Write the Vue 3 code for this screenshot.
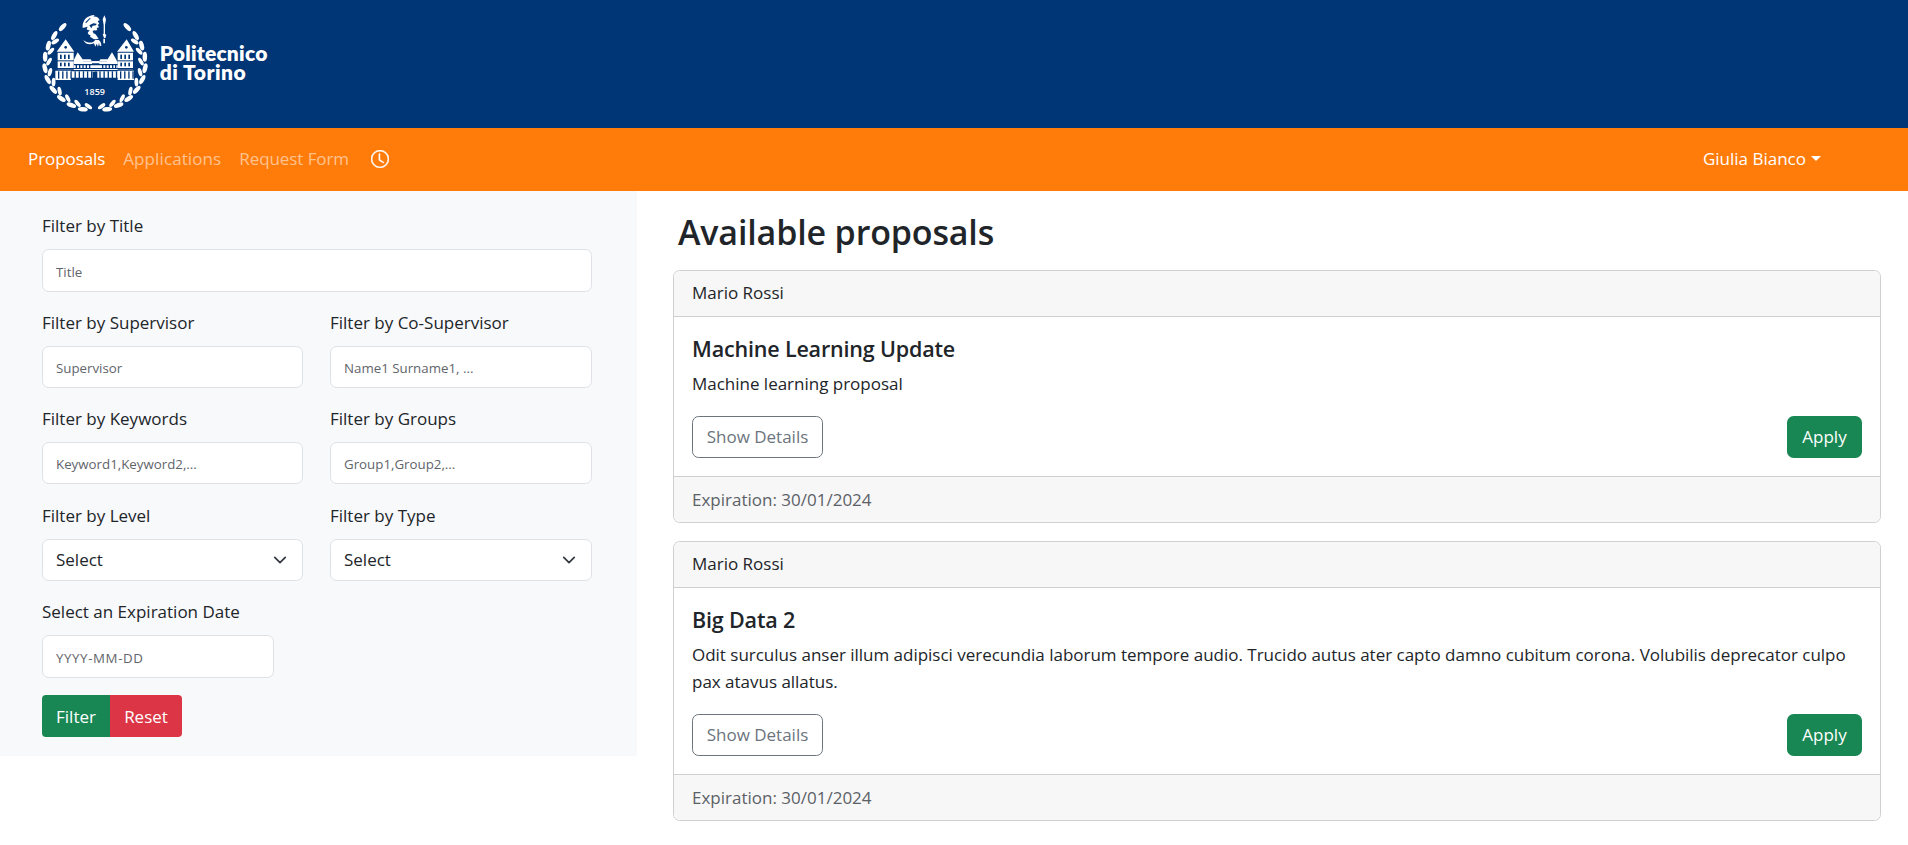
<script setup>
const filterRows = [
  [
    { label: 'Filter by Supervisor', hint: 'Supervisor' },
    { label: 'Filter by Co-Supervisor', hint: 'Name1 Surname1, ...' },
  ],
  [
    { label: 'Filter by Keywords', hint: 'Keyword1,Keyword2,...' },
    { label: 'Filter by Groups', hint: 'Group1,Group2,...' },
  ],
]
const selects = ['Filter by Level', 'Filter by Type']

const proposals = [
  {
    supervisor: 'Mario Rossi',
    title: 'Machine Learning Update',
    text: 'Machine learning proposal',
    expiration: '30/01/2024',
  },
  {
    supervisor: 'Mario Rossi',
    title: 'Big Data 2',
    text: 'Odit surculus anser illum adipisci verecundia laborum tempore audio. Trucido autus ater capto damno cubitum corona. Volubilis deprecator culpo pax atavus allatus.',
    expiration: '30/01/2024',
  },
]

// Laurel wreath: leaf pairs along an arc, mirrored around the vertical axis
const leaves = []
for (let i = 0; i < 10; i++) {
  const a = 40 + i * 14
  const r = (a * Math.PI) / 180
  for (const side of [-1, 1]) {
    const outer = { x: 195 + side * 151 * Math.sin(r), y: 190 - 142 * Math.cos(r) }
    const r2 = r + 0.1
    const inner = { x: 195 + side * 138 * Math.sin(r2), y: 190 - 130 * Math.cos(r2) }
    leaves.push({ ...outer, rot: side * (a + 8), rx: 15, ry: 6.8 })
    if (i > 0) leaves.push({ ...inner, rot: side * (a - 22), rx: 13, ry: 5.8 })
  }
}
const windows = [90, 102, 114, 271, 283, 295]
const arcade = Array.from({ length: 19 }, (_, i) => 84 + i * 12.4)
</script>

<template>
  <div class="page">
    <header class="brand">
      <svg class="logo" viewBox="0 0 750 384" width="250" height="128">
        <g fill="#fff">
          <ellipse
            v-for="(l, i) in leaves"
            :key="i"
            :rx="l.rx"
            :ry="l.ry"
            :transform="`translate(${l.x} ${l.y}) rotate(${l.rot})`"
          />
          <!-- helmeted head with crest and spear -->
          <path d="M158 84c-2-22 12-38 36-39l-4 5c10-1 17 4 19 11l-6 2 5 9-5 2 4 8-7 2 2 6-8 2-6 8 4 6c-8 3-15 0-19-7l6-9c-4 1-8 0-9-3l3-7z" />
          <path d="M186 98l10 4 10 14-14 2-12-8z" />
          <path d="M160 120c14 11 30 10 36-1l10 1c5 4 8 9 8 18l-5-1-2-8-3 11-4-9-4 9-4-10c-14 6-27 2-32-10z" />
          <path d="M223 46l5 12-3 17h-4l-3-17zM221 74h4v29h-4zM218 103l5-3 6 5-3 9h-4zM220 116h5v14h-5z" />
          <!-- palace -->
          <path d="M107 118l26 37H80zM290 118l22 37h-51z" />
          <path d="M83 158h48v50H83zM263 158h46v50h-46z" />
          <path d="M143 157l17 24v8h-29v-8zM246 157l14 24v8h-29v-8z" />
          <path d="M131 184h132v8H131zM131 196h132v14H131z" />
          <path d="M76 212h47v28H76zM263 212h49v28h-49zM123 214h140v19H123z" />
          <path d="M158 178h24l5 8h19l5-8h22v6h-75z" />
        </g>
        <g fill="#003576">
          <rect v-for="x in windows" :key="'a' + x" :x="x" y="164" width="5" height="13" />
          <rect v-for="x in windows" :key="'b' + x" :x="x" y="188" width="5" height="11" />
          <rect x="80" y="181" width="52" height="3" />
          <rect x="262" y="181" width="48" height="3" />
          <rect x="80" y="204" width="232" height="3" />
          <rect v-for="x in arcade" :key="'c' + x" :x="x" y="214" width="4" height="22" />
          <rect v-for="x in [137, 147, 157, 167, 177, 216, 226, 236, 246, 255]" :key="'d' + x" :x="x" y="195" width="4" height="10" />
          <path d="M186 190h22v4h-22zM188 215h14v20h-14z" />
          <circle cx="107" cy="142" r="4" />
          <circle cx="289" cy="142" r="4" />
          <path d="M178 76l12-6 10 1-2 5-10 1-4 8zM166 67l14-14 2 2-14 15zM188 92l8-1-1 4-6 2z" />
        </g>
        <text class="year" x="163" y="284" textLength="62">1859</text>
        <text class="word" x="389" y="183" textLength="323">Politecnico</text>
        <text class="word" x="389" y="241" textLength="258">di Torino</text>
      </svg>
    </header>

    <nav class="nav">
      <a class="link active">Proposals</a>
      <a class="link apps">Applications</a>
      <a class="link">Request Form</a>
      <svg class="clock" viewBox="0 0 16 16" width="18" height="18" fill="#fff" stroke="#fff" stroke-width="0.45">
        <path d="M8 3.5a.5.5 0 0 0-1 0V9a.5.5 0 0 0 .252.434l3.5 2a.5.5 0 0 0 .496-.868L8 8.71z" />
        <path d="M8 16A8 8 0 1 0 8 0a8 8 0 0 0 0 16m7-8A7 7 0 1 1 1 8a7 7 0 0 1 14 0" />
      </svg>
      <a class="user">Giulia Bianco<span class="caret"></span></a>
    </nav>

    <main class="main">
      <aside class="filters">
        <div class="field wide">
          <label>Filter by Title</label>
          <input type="text" placeholder="Title" />
        </div>
        <div v-for="(row, i) in filterRows" :key="i" class="pair">
          <div v-for="f in row" :key="f.label" class="field">
            <label>{{ f.label }}</label>
            <input type="text" :placeholder="f.hint" />
          </div>
        </div>
        <div class="pair">
          <div v-for="s in selects" :key="s" class="field">
            <label>{{ s }}</label>
            <div class="select">
              <span>Select</span>
              <svg viewBox="0 0 16 16" width="14" height="14" fill="none" stroke="#343a40" stroke-width="2" stroke-linecap="round" stroke-linejoin="round">
                <path d="m2 5 6 6 6-6" />
              </svg>
            </div>
          </div>
        </div>
        <div class="field date">
          <label>Select an Expiration Date</label>
          <input type="text" placeholder="YYYY-MM-DD" />
        </div>
        <div class="actions">
          <button class="filter">Filter</button><button class="reset">Reset</button>
        </div>
      </aside>

      <section class="list">
        <h1>Available proposals</h1>
        <article v-for="p in proposals" :key="p.title" class="card">
          <div class="card-head">{{ p.supervisor }}</div>
          <div class="card-body">
            <h2>{{ p.title }}</h2>
            <p>{{ p.text }}</p>
            <div class="card-actions">
              <button class="details">Show Details</button>
              <button class="apply">Apply</button>
            </div>
          </div>
          <div class="card-foot">Expiration: {{ p.expiration }}</div>
        </article>
      </section>
    </main>
  </div>
</template>

<style>
body {
  background: #fff;
}
</style>

<style scoped>
.page,
.page * {
  box-sizing: border-box;
}
.page {
  height: 845px;
  overflow: hidden;
  font-family: 'Open Sans', 'Noto Sans', sans-serif;
  font-size: 17px;
  line-height: 27px;
  color: #212529;
}
.brand {
  height: 128px;
  padding-left: 30px;
  background: #003576;
}
.logo {
  display: block;
}
.logo text {
  fill: #fff;
}
.year {
  font: 600 27px 'Open Sans', sans-serif;
}
.word {
  font: 800 63px Lato, sans-serif;
}
.nav {
  display: flex;
  align-items: center;
  height: 63px;
  padding: 0 87px 2px 28px;
  background: #ff7c0a;
  color: #fff;
}
.link {
  margin-right: 18px;
  color: rgba(255, 255, 255, 0.55);
  letter-spacing: -0.08px;
}
.link.active {
  color: #fff;
}
.link.apps {
  letter-spacing: 0.1px;
}
.clock {
  margin-left: 4px;
}
.user {
  display: flex;
  align-items: center;
  margin-left: auto;
}
.caret {
  margin: -1px 0 0 5px;
  border: 5px solid transparent;
  border-top-color: #fff;
  border-bottom: 0;
}
.main {
  display: flex;
  align-items: flex-start;
}
.filters {
  width: 637px;
  height: 565px;
  padding: 21px 45px 0 42px;
  background: #f8f9fb;
}
.field {
  height: 96px;
}
.field.wide {
  height: 97px;
}
.pair {
  display: grid;
  grid-template-columns: 261px 262px;
  gap: 27px;
  height: 96.4px;
}
label {
  display: block;
  height: 37px;
}
input {
  display: block;
  width: 100%;
  height: 43px;
  margin: 0;
  padding: 2px 13px 0;
  border: 1px solid #dee2e6;
  border-radius: 6.6px;
  background: #fff;
  font: 13.3px 'Open Sans', 'Noto Sans', sans-serif;
}
.pair input {
  height: 42px;
}
input::placeholder {
  color: #5f656b;
  opacity: 1;
}
.select {
  display: flex;
  align-items: center;
  justify-content: space-between;
  height: 42px;
  padding: 0 15px 0 13px;
  border: 1px solid #dee2e6;
  border-radius: 6.6px;
  background: #fff;
}
.date {
  width: 232px;
}
.date input {
  letter-spacing: 0.6px;
}
.actions {
  display: flex;
  padding-top: 1px;
}
button {
  height: 42px;
  padding: 0 0 2px;
  border: 0;
  color: #fff;
  font: inherit;
}
.filter {
  width: 68px;
  padding-bottom: 0;
  border-radius: 4px 0 0 4px;
  background: #198754;
}
.reset {
  width: 72px;
  padding-bottom: 0;
  border-radius: 0 4px 4px 0;
  background: #dc3545;
}
.list {
  flex: 1;
  padding: 0 27px 0 36px;
}
h1 {
  margin: 0 0 0 5px;
  padding-top: 18px;
  height: 79px;
  font-size: 34px;
  font-weight: 600;
  line-height: 46px;
  letter-spacing: -0.15px;
}
.card {
  margin-bottom: 18px;
  border: 1px solid #cfd0d1;
  border-radius: 6.6px;
  overflow: hidden;
}
.card-head,
.card-foot {
  height: 46px;
  padding: 9px 18px;
  background: #f7f7f7;
}
.card-head {
  padding-top: 8px;
  border-bottom: 1px solid #cfd0d1;
}
.card-foot {
  border-top: 1px solid #cfd0d1;
  color: #5c6167;
}
.card-body {
  padding: 18px;
}
h2 {
  margin: 0 0 8px;
  font-size: 21.5px;
  font-weight: 600;
  line-height: 27px;
  letter-spacing: -0.17px;
}
p {
  margin: 0;
  letter-spacing: -0.015px;
}
.card-actions {
  display: flex;
  justify-content: space-between;
  margin-top: 19px;
}
.details {
  width: 131px;
  border: 1px solid #6c757d;
  border-radius: 6.6px;
  background: #fff;
  color: #6c757d;
}
.apply {
  width: 75px;
  border-radius: 6.6px;
  background: #198754;
}
</style>
